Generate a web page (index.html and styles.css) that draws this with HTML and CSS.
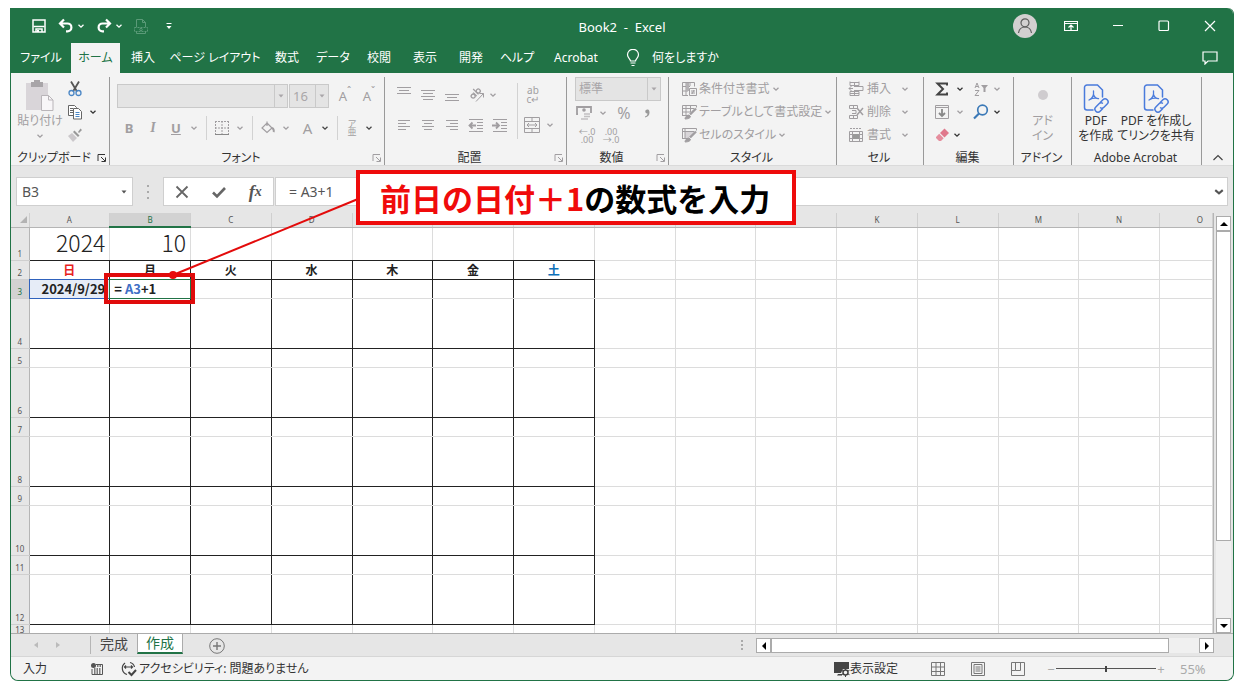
FILE: index.html
```html
<!DOCTYPE html>
<html lang="ja">
<head>
<meta charset="utf-8">
<title>Book2 - Excel</title>
<link rel="stylesheet" href="styles.css">
</head>
<body>
<svg class="defs" aria-hidden="true">
  <symbol id="chev" viewBox="0 0 8 8"><path d="M1.5 2.8 4 5.2 6.5 2.8" fill="none" stroke="currentColor" stroke-width="1.3"/></symbol>
  <symbol id="tri" viewBox="0 0 8 8"><path d="M1.5 2.5h5L4 5.5z" fill="currentColor"/></symbol>
  <symbol id="launch" viewBox="0 0 10 10"><path d="M1 8V1.500h7M4 4l4 4M8.500 4.500v4h-4" fill="none" stroke="currentColor"/></symbol>
  <symbol id="pdf" viewBox="0 0 28 30"><g fill="none" stroke="#4a7bdc" stroke-width="1.500" stroke-linecap="round"><path d="M11 27H5a2.500 2.500 0 0 1-2.500-2.500v-20A2.500 2.500 0 0 1 5 2h10.500l5 5v7"/><path d="M7 17c3.500-1.500 5-5 4.500-9M11.500 11.500c.8 2.500 2.500 4 5 4.200M7.500 16.800c2.500-1.500 5.500-2 9-1.200" stroke-width="1.300"/><g transform="rotate(-45 19.500 22.500)"><path d="M18 25.500h-3.500a3 3 0 0 1 0-6H19a3 3 0 0 1 2.800 2"/><path d="M21 19.500h3.500a3 3 0 0 1 0 6H20a3 3 0 0 1-2.800-2"/></g></g></symbol>
</svg>

<main class="window">
  <header class="titlebar">
    <div class="quick">
      <button aria-label="上書き保存"><svg width="16" height="16" viewBox="0 0 16 16" fill="none" stroke="currentColor" stroke-width="1.500"><path d="M2 2h12v12H2z"/><path d="M2.500 8.500h11" /><path d="M5 14v-3h6v3" /><path d="M6 12h2v2H6z" fill="currentColor" stroke="none"/></svg></button>
      <button aria-label="元に戻す"><svg width="16" height="16" viewBox="0 0 16 16" fill="none" stroke="currentColor" stroke-width="2.200"><path d="M6 1.500 2 5.500l4 4M2.500 5.500h7a3.800 3.800 0 0 1 0 7.800H8"/></svg><svg width="8" height="8"><use href="#chev"/></svg></button>
      <button aria-label="やり直し"><svg width="16" height="16" viewBox="0 0 16 16" fill="none" stroke="currentColor" stroke-width="2.200"><path d="m10 1.500 4 4-4 4M13.500 5.500h-7a3.800 3.800 0 0 0 0 7.800H8"/></svg><svg width="8" height="8"><use href="#chev"/></svg></button>
      <button aria-label="PDF" class="faint"><svg width="14" height="16" viewBox="0 0 14 16" fill="none" stroke="currentColor"><path d="M2.500 9V1.500h6l3 3V9M8.500 1.500v3h3M2.500 14v1.500h9V14"/><path d="M.5 9.500h13v4H.5z" stroke-dasharray="2 1"/><circle cx="7" cy="11.500" r="1.200"/></svg></button>
      <button aria-label="カスタマイズ"><svg width="8" height="8" viewBox="0 0 8 8" fill="currentColor"><path d="M1.500 1h5v1h-5zM1.500 4h5L4 7z"/></svg></button>
    </div>
    <h1 class="title">Book2&nbsp; -&nbsp; Excel</h1>
    <div class="syscontrols">
      <button class="avatar" aria-label="アカウント"><svg width="24" height="24" viewBox="0 0 24 24"><circle cx="12" cy="12" r="12" fill="#d2d0d0"/><g fill="none" stroke="#5c5c5c" stroke-width="1.200"><circle cx="12" cy="8.800" r="4"/><path d="M5.500 19c.6-4 3-6 6.500-6s5.900 2 6.500 6"/></g></svg></button>
      <button aria-label="リボンの表示オプション"><svg width="14" height="12" viewBox="0 0 14 12" fill="none" stroke="currentColor"><path d="M.5 1.500h13v9H.5zM.5 3.500h13M7 10V5M4.500 7.500 7 5l2.500 2.500" stroke-width="1.200"/></svg></button>
      <button aria-label="最小化"><svg width="12" height="12" viewBox="0 0 12 12"><path d="M1 5.500h10" stroke="currentColor"/></svg></button>
      <button aria-label="最大化"><svg width="12" height="12" viewBox="0 0 12 12"><rect x="1" y="1" width="9.500" height="9.500" rx="1" fill="none" stroke="currentColor" stroke-width="1.200"/></svg></button>
      <button aria-label="閉じる"><svg width="12" height="12" viewBox="0 0 12 12"><path d="m1 1 10 10M11 1 1 11" stroke="currentColor" stroke-width="1.200"/></svg></button>
    </div>
  </header>

  <nav class="tabs">
    <button class="tab">ファイル</button><button class="tab active">ホーム</button><button class="tab">挿入</button><button class="tab wide">ページ レイアウト</button><button class="tab">数式</button><button class="tab">データ</button><button class="tab">校閲</button><button class="tab">表示</button><button class="tab">開発</button><button class="tab">ヘルプ</button><button class="tab acro">Acrobat</button>
    <button class="tell"><svg width="14" height="18" viewBox="0 0 14 18" fill="none" stroke="currentColor" stroke-width="1.200"><path d="M4.500 12c0-2-3-3.200-3-6.200a5 5 0 0 1 11 0c0 3-3 4.200-3 6.200zM4.500 14h5M5.500 16.500h3"/></svg>何をしますか</button>
    <button class="comment" aria-label="コメント"><svg width="16" height="14" viewBox="0 0 16 14" fill="none" stroke="currentColor" stroke-width="1.200"><path d="M1 1h14v9H6l-3 3v-3H1z"/></svg></button>
  </nav>

  <section class="ribbon">
    <div class="group clip">
      <div class="tools">
        <button class="paste off"><svg width="28" height="32" viewBox="0 0 28 32"><path d="M0 3h22v27H0z" fill="#d9d5d9"/><path d="M5 2h3V0h6v2h3v5H5z" fill="#a8a5a8"/><path d="M15.500 15.500h7l4.500 4.500v10.500H15.500z" fill="#f8f6f8" stroke="#b9b5b9"/><path d="M22.500 15.500V20H27" fill="none" stroke="#b9b5b9"/></svg>貼り付け<svg width="8" height="8"><use href="#chev"/></svg></button>
        <div class="stack">
          <button aria-label="切り取り"><svg width="16" height="16" viewBox="0 0 16 16" fill="none"><path d="m4 .5 6 10M12 .5l-6 10" stroke="#555" stroke-width="1.800"/><circle cx="4.500" cy="12" r="2.500" stroke="#4a86c5" stroke-width="1.300"/><circle cx="11.500" cy="12" r="2.500" stroke="#4a86c5" stroke-width="1.300"/></svg></button>
          <button aria-label="コピー"><svg width="16" height="16" viewBox="0 0 16 16" fill="#fff" stroke="#666"><path d="M1.500 1.500h6l2 2v8h-8zM3 4.500h3M3 6.500h3M3 8.500h3"/><path d="M6.500 4.500h5l3 3v7.500h-8z"/><path d="M8.500 8.500h4M8.500 10.500h4M8.500 12.500h4" stroke="#4a86c5"/></svg><svg class="push" width="8" height="8"><use href="#chev"/></svg></button>
          <button class="off" aria-label="書式のコピー"><svg width="16" height="16" viewBox="0 0 16 16"><path d="M1 9l4-3 5 5-4 4z" fill="#cbc8cb"/><path d="m6 5 5 5 1.500-1.500-5-5zM11 5l2.500-3.500 1.500 1.500L12 6z" fill="#999"/></svg></button>
        </div>
      </div>
      <div class="caption"><span>クリップボード</span><button aria-label="クリップボード詳細"><svg width="10" height="10"><use href="#launch"/></svg></button></div>
    </div>

    <div class="group font">
      <div class="tools col">
        <div class="line">
          <label class="combo fname"><select aria-label="フォント名" disabled><option></option></select><svg width="8" height="8"><use href="#tri"/></svg></label>
          <label class="combo fsize"><select aria-label="フォントサイズ" disabled><option>16</option></select><svg width="8" height="8"><use href="#tri"/></svg></label>
          <button class="off glyph grow">A<sup>ˆ</sup></button><button class="off glyph grow">A<sup>ˇ</sup></button>
        </div>
        <div class="line styles">
          <button class="off glyph"><b>B</b></button><button class="off glyph serif"><i>I</i></button><button class="off split under"><b><u>U</u></b><svg width="8" height="8"><use href="#chev"/></svg></button>
          <i class="sep"></i>
          <button class="off split" aria-label="罫線"><svg width="16" height="16" viewBox="0 0 16 16" fill="none" stroke="currentColor"><path d="M1.500 1v13.500M8 1v13.500M14.500 1v13.500M1 1.500h14M1 8h14" stroke-dasharray="2 1"/><path d="M1 14.500h14" stroke="#888"/></svg><svg width="8" height="8"><use href="#chev"/></svg></button>
          <i class="sep"></i>
          <button class="off split" aria-label="塗りつぶし"><svg width="16" height="16" viewBox="0 0 16 16" fill="none" stroke="currentColor" stroke-width="1.200"><path d="m7 3 5 5-5 4.500L2 8zM7 6V1.500"/><path d="M12 8c2 1 2 3 1.500 4" stroke-width="2"/></svg><svg width="8" height="8"><use href="#chev"/></svg></button>
          <button class="off split big">A<svg class="dark" width="8" height="8"><use href="#chev"/></svg></button>
          <i class="sep"></i>
          <button class="off split ruby"><span>ア<br>亜</span><svg class="dark" width="8" height="8"><use href="#chev"/></svg></button>
        </div>
      </div>
      <div class="caption"><span>フォント</span><button class="off" aria-label="フォント詳細"><svg width="10" height="10"><use href="#launch"/></svg></button></div>
    </div>

    <div class="group align">
      <div class="tools">
        <div class="alignments off">
          <button aria-label="上揃え"><svg width="16" height="16" viewBox="0 0 16 16" stroke="currentColor"><path d="M1 .5h14M3 3.500h10M1 6.500h14"/></svg></button>
          <button aria-label="上下中央"><svg width="16" height="16" viewBox="0 0 16 16" stroke="currentColor"><path d="M1 3.500h14M3 6.500h10M1 9.500h14M3 12.500h10"/></svg></button>
          <button aria-label="下揃え"><svg width="16" height="16" viewBox="0 0 16 16" stroke="currentColor"><path d="M1 7.500h14M3 10.500h10M1 13.500h14"/></svg></button>
          <button class="two" aria-label="方向"><svg width="18" height="16" viewBox="0 0 18 16" fill="none" stroke="currentColor"><g transform="rotate(-45 8 7)" stroke-width="1.300"><circle cx="4.500" cy="6.500" r="2"/><path d="M7 4v5M9.500 1.500V9"/><circle cx="11.700" cy="6.500" r="2"/></g><path d="m8 14.500 7.500-8M11.500 6.500h4v4"/></svg><svg width="8" height="8"><use href="#chev"/></svg></button>
          <button aria-label="左揃え"><svg width="16" height="16" viewBox="0 0 16 16" stroke="currentColor"><path d="M2 3.500h12M2 6.500h8M2 9.500h12M2 12.500h8"/></svg></button>
          <button aria-label="中央揃え"><svg width="16" height="16" viewBox="0 0 16 16" stroke="currentColor"><path d="M2 3.500h12M4 6.500h8M2 9.500h12M4 12.500h8"/></svg></button>
          <button aria-label="右揃え"><svg width="16" height="16" viewBox="0 0 16 16" stroke="currentColor"><path d="M2 3.500h12M6 6.500h8M2 9.500h12M6 12.500h8"/></svg></button>
          <button aria-label="インデントを減らす"><svg width="16" height="16" viewBox="0 0 16 16" fill="none" stroke="currentColor"><path d="M1 2.500h14M9 5.500h6M9 8.500h6M9 11.500h6M1 14.500h14"/><path d="M8 8.500H2M4.500 5.500l-3 3 3 3" stroke-width="1.800"/></svg></button>
          <button aria-label="インデントを増やす"><svg width="16" height="16" viewBox="0 0 16 16" fill="none" stroke="currentColor"><path d="M1 2.500h14M9 5.500h6M9 8.500h6M9 11.500h6M1 14.500h14"/><path d="M0 8.500h6M4 5.500l3 3-3 3" stroke-width="1.800"/></svg></button>
        </div>
        <i class="sep tall"></i>
        <div class="merge off">
          <button class="wrap">ab<br>c↵</button>
          <button class="split" aria-label="セルを結合"><svg width="16" height="16" viewBox="0 0 16 16" fill="none" stroke="currentColor"><path d="M.5.5h15v15H.5zM.5 4.500h15M.5 11.500h15M8 .5v4M8 11.500v4M3 8h10M5 6 3 8l2 2M11 6l2 2-2 2"/></svg><svg width="8" height="8"><use href="#chev"/></svg></button>
        </div>
      </div>
      <div class="caption"><span>配置</span><button class="off" aria-label="配置詳細"><svg width="10" height="10"><use href="#launch"/></svg></button></div>
    </div>

    <div class="group number">
      <div class="tools col">
        <label class="combo"><select aria-label="表示形式" disabled><option>標準</option></select><svg width="8" height="8"><use href="#tri"/></svg></label>
        <div class="line off">
          <button class="split" aria-label="通貨"><svg width="18" height="16" viewBox="0 0 18 16" fill="none" stroke="currentColor"><path d="M3 9H2V2h14v6" stroke-width="1.800"/><circle cx="9" cy="5" r="1.800" fill="currentColor" stroke="none"/><path d="M9 9h6M9 11.500h6M6 14h7" stroke-width="1.400" opacity=".6"/></svg><svg width="8" height="8"><use href="#chev"/></svg></button>
          <button class="pct">%</button><button class="pct comma" aria-label="桁区切り"><svg width="8" height="10" viewBox="0 0 8 10"><path d="M4 1.500a2 2 0 1 0 .5 4C4.500 7 3.500 8 2 8.500v1C5 9 6.500 7 6.500 4.500S5.500 1.500 4 1.500z" fill="#999"/></svg></button>
        </div>
        <div class="line off decimals"><button>←.0<br>.00</button><button>.00<br>→.0</button></div>
      </div>
      <div class="caption"><span>数値</span><button class="off" aria-label="数値詳細"><svg width="10" height="10"><use href="#launch"/></svg></button></div>
    </div>

    <div class="group style">
      <div class="tools col off list">
        <button><svg width="16" height="16" viewBox="0 0 16 16" fill="none" stroke="currentColor"><path d="M1.500 1.500h12v4M1.500 1.500v13H7M1 5.500h8M1 10h6M5 1v13M9 1v4"/><path d="M5 2h3v8H5z" fill="#b5b2b5" stroke="none"/><path d="M8.500 7.500h7v7h-7zM10 10h4M10 12h4M13 9l-2 4"/></svg>条件付き書式<svg width="8" height="8"><use href="#chev"/></svg></button>
        <button><svg width="16" height="16" viewBox="0 0 16 16" fill="none" stroke="currentColor"><path d="M1.500 11.500v-10h14v2M1 4.500h12M1 8h9M1 11.500h6M5 1v10M9.500 1v7"/><path d="m15 4.500-6 6" stroke-width="2.400"/><path d="M4 15c0-2 2-4 4-4l1.500 1.500C9.500 14 7 15 4 15z" fill="currentColor"/></svg>テーブルとして書式設定<svg width="8" height="8"><use href="#chev"/></svg></button>
        <button><svg width="16" height="16" viewBox="0 0 16 16" fill="none" stroke="currentColor"><path d="M4 5h9l-5 6H4z" fill="#d8d5d8" stroke="none"/><path d="M1.500 11.500v-10h14v2M1 4.500h12M1 11.500h6M4 1v10"/><path d="m15 4.500-6 6" stroke-width="2.400"/><path d="M4 15c0-2 2-4 4-4l1.500 1.500C9.500 14 7 15 4 15z" fill="currentColor"/></svg>セルのスタイル<svg width="8" height="8"><use href="#chev"/></svg></button>
      </div>
      <div class="caption"><span>スタイル</span></div>
    </div>

    <div class="group cells">
      <div class="tools col off list">
        <button><svg width="16" height="16" viewBox="0 0 16 16" fill="none" stroke="currentColor"><path d="M2 1.500h9M2 .5v4h9v-4M6.500 1v3M2 10.500h9v4H2zM2 12.500h9M6.500 10v5M6 5.500h9v4H6M5 7.500H1M3.500 5 1 7.500 3.500 10" /></svg><span>挿入</span><svg width="8" height="8"><use href="#chev"/></svg></button>
        <button><svg width="16" height="16" viewBox="0 0 16 16" fill="none" stroke="currentColor"><path d="M1.500 1.500h8v3h-8zM5.500 1v3M1.500 11.500h8v3h-8zM5.500 11v4M4 6.500h4v3H4"/><path d="m9 4 6 7M15 4l-6 7" stroke-width="1.500"/></svg><span>削除</span><svg width="8" height="8"><use href="#chev"/></svg></button>
        <button><svg width="16" height="16" viewBox="0 0 16 16" fill="none" stroke="currentColor"><path d="M2 1.500h12" stroke-dasharray="2 1"/><path d="M1.500 4.500h13v10h-13zM1 7.500h13M1 11.500h13M4.500 4v10M11.500 4v10"/><path d="M5 7h6v5H5z" fill="#999" stroke="none"/></svg><span>書式</span><svg width="8" height="8"><use href="#chev"/></svg></button>
      </div>
      <div class="caption"><span>セル</span></div>
    </div>

    <div class="group edit">
      <div class="tools grid">
        <button aria-label="合計"><svg width="16" height="16" viewBox="0 0 16 16" fill="none" stroke="#444" stroke-width="2"><path d="M13 4.500V2.500H3.500L9 8l-5.500 5.500H13v-2"/></svg><svg width="8" height="8"><use href="#chev"/></svg></button>
        <button class="off" aria-label="並べ替えとフィルター"><svg width="16" height="16" viewBox="0 0 16 16" fill="none" stroke="currentColor"><path d="m2 7 2-5 2 5M3 5.500h2M2 9.500h4l-4 5h4"/><path d="M8 4h7l-2.500 3v4h-2V7z" fill="currentColor" stroke="none"/></svg><svg width="8" height="8"><use href="#chev"/></svg></button>
        <button class="off" aria-label="フィル"><svg width="16" height="16" viewBox="0 0 16 16" fill="none" stroke="currentColor"><path d="M1.500 1.500h13v13h-13zM1.500 3.500h13"/><path d="M8 5v7M5 9l3 3 3-3" stroke="#888" stroke-width="1.800"/></svg><svg width="8" height="8"><use href="#chev"/></svg></button>
        <button aria-label="検索と選択"><svg width="16" height="16" viewBox="0 0 16 16" fill="none" stroke="#3b79b7" stroke-width="1.700"><circle cx="9.500" cy="6" r="4.800"/><path d="m6 9.500-5 5" stroke-width="2.200"/></svg><svg width="8" height="8"><use href="#chev"/></svg></button>
        <button class="clear" aria-label="クリア"><svg width="16" height="16" viewBox="0 0 16 16"><path d="m6 6 4.500-4.500 4.500 4.500-4.500 4.500z" fill="#e0788c"/><path d="m5.200 6.800 4.500 4.500L7 14H5l-3-3v-1z" fill="#e58d9d"/></svg><svg width="8" height="8"><use href="#chev"/></svg></button>
      </div>
      <div class="caption"><span>編集</span></div>
    </div>

    <div class="group addin">
      <div class="tools"><button class="tallbtn off"><svg width="28" height="30" viewBox="0 0 28 30"><circle cx="14" cy="12" r="5" fill="#cfcccf"/></svg>アド<br>イン</button></div>
      <div class="caption"><span>アドイン</span></div>
    </div>

    <div class="group acrobat">
      <div class="tools">
        <button class="tallbtn"><svg width="28" height="30"><use href="#pdf"/></svg>PDF<br>を作成</button>
        <button class="tallbtn"><svg width="28" height="30"><use href="#pdf"/></svg>PDF を作成し<br>てリンクを共有</button>
      </div>
      <div class="caption"><span>Adobe Acrobat</span></div>
    </div>
    <button class="collapse" aria-label="リボンを折りたたむ"><svg width="12" height="8" viewBox="0 0 12 8"><path d="m1.500 6 4.500-4.500L10.500 6" fill="none" stroke="#444" stroke-width="1.200"/></svg></button>
  </section>

  <section class="formulabar">
    <label class="namebox"><input aria-label="名前ボックス" value="B3"><svg width="8" height="8"><use href="#tri"/></svg></label>
    <span class="dots"></span>
    <div class="fbuttons">
      <button aria-label="キャンセル"><svg width="14" height="14" viewBox="0 0 14 14" stroke="#666" stroke-width="1.800"><path d="m1.500 1.500 11 11M12.500 1.500l-11 11"/></svg></button>
      <button aria-label="入力"><svg width="14" height="14" viewBox="0 0 14 14" fill="none" stroke="#666" stroke-width="2.600"><path d="m1 7.500 4 4 8-8.500"/></svg></button>
      <button class="fx"><i>f</i><i>x</i></button>
    </div>
    <label class="formula"><input aria-label="数式バー" value="= A3+1"><svg width="10" height="10" viewBox="0 0 8 8"><path d="M1 2.500 4 5l3-2.500" fill="none" stroke="#555" stroke-width="1.700"/></svg></label>
  </section>

  <section class="sheetarea">
    <table class="sheet">
      <colgroup><col class="rowhead"><col span="14"><col class="last"></colgroup>
      <thead><tr><th class="corner"><svg width="8" height="8" viewBox="0 0 8 8"><path d="M8 1v7H1z" fill="#b3b3b3"/></svg></th><th>A</th><th class="sel">B</th><th>C</th><th>D</th><th></th><th></th><th></th><th></th><th></th><th></th><th>K</th><th>L</th><th>M</th><th>N</th><th class="o">O</th></tr></thead>
      <tbody>
        <tr class="first"><th>1</th><td>2024</td><td>10</td><td></td><td></td><td></td><td></td><td></td><td></td><td></td><td></td><td></td><td></td><td></td><td></td><td></td></tr>
        <tr class="days cal end"><th>2</th><td class="sun">日</td><td>月</td><td>火</td><td>水</td><td>木</td><td>金</td><td class="sat">土</td><td></td><td></td><td></td><td></td><td></td><td></td><td></td><td></td></tr>
        <tr class="cal dates"><th class="sel">3</th><td class="ref"><div>2024/9/29</div></td><td class="editing"><div>= <span>A3</span>+1</div></td><td></td><td></td><td></td><td></td><td></td><td></td><td></td><td></td><td></td><td></td><td></td><td></td><td></td></tr>
        <tr class="cal tall end"><th>4</th><td></td><td></td><td></td><td></td><td></td><td></td><td></td><td></td><td></td><td></td><td></td><td></td><td></td><td></td><td></td></tr>
        <tr class="cal"><th>5</th><td></td><td></td><td></td><td></td><td></td><td></td><td></td><td></td><td></td><td></td><td></td><td></td><td></td><td></td><td></td></tr>
        <tr class="cal tall end"><th>6</th><td></td><td></td><td></td><td></td><td></td><td></td><td></td><td></td><td></td><td></td><td></td><td></td><td></td><td></td><td></td></tr>
        <tr class="cal"><th>7</th><td></td><td></td><td></td><td></td><td></td><td></td><td></td><td></td><td></td><td></td><td></td><td></td><td></td><td></td><td></td></tr>
        <tr class="cal tall end"><th>8</th><td></td><td></td><td></td><td></td><td></td><td></td><td></td><td></td><td></td><td></td><td></td><td></td><td></td><td></td><td></td></tr>
        <tr class="cal"><th>9</th><td></td><td></td><td></td><td></td><td></td><td></td><td></td><td></td><td></td><td></td><td></td><td></td><td></td><td></td><td></td></tr>
        <tr class="cal tall end"><th>10</th><td></td><td></td><td></td><td></td><td></td><td></td><td></td><td></td><td></td><td></td><td></td><td></td><td></td><td></td><td></td></tr>
        <tr class="cal"><th>11</th><td></td><td></td><td></td><td></td><td></td><td></td><td></td><td></td><td></td><td></td><td></td><td></td><td></td><td></td><td></td></tr>
        <tr class="cal tall end"><th>12</th><td></td><td></td><td></td><td></td><td></td><td></td><td></td><td></td><td></td><td></td><td></td><td></td><td></td><td></td><td></td></tr>
        <tr class="cut"><th>13</th><td></td><td></td><td></td><td></td><td></td><td></td><td></td><td></td><td></td><td></td><td></td><td></td><td></td><td></td><td></td></tr>
      </tbody>
    </table>
    <div class="vscroll">
      <button aria-label="上へ"><svg width="10" height="8" viewBox="0 0 10 8"><path d="M1 6h8L5 2z"/></svg></button>
      <div class="track"><div class="thumb"></div></div>
      <button aria-label="下へ"><svg width="10" height="8" viewBox="0 0 10 8"><path d="M1 2h8L5 6z"/></svg></button>
    </div>
  </section>

  <section class="sheettabs">
    <div class="navs"><svg width="6" height="8" viewBox="0 0 6 8"><path d="M5 1v6L1 4z" fill="#bbb"/></svg><svg width="6" height="8" viewBox="0 0 6 8"><path d="M1 1v6l4-3z" fill="#bbb"/></svg></div>
    <button class="stab">完成</button><button class="stab on">作成</button>
    <button class="add" aria-label="新しいシート"><svg width="16" height="16" viewBox="0 0 16 16" fill="none" stroke="#777"><circle cx="8" cy="8" r="7.300"/><path d="M8 4v8M4 8h8" stroke-width="1.400"/></svg></button>
    <span class="dots small"></span>
    <div class="hscroll">
      <button aria-label="左へ"><svg width="8" height="10" viewBox="0 0 8 10"><path d="M6 1v8L2 5z"/></svg></button>
      <div class="track"><div class="thumb"></div></div>
      <button aria-label="右へ"><svg width="8" height="10" viewBox="0 0 8 10"><path d="M2 1v8l4-4z"/></svg></button>
    </div>
  </section>

  <footer class="status">
    <span class="mode">入力</span>
    <svg width="12" height="12" viewBox="0 0 12 12" fill="none" stroke="#555"><path d="M5 1.500h6.500v10H1V6"/><circle cx="2.500" cy="2.500" r="2.500" fill="#555" stroke="none"/><path d="M6 3h5M3 6h7M3 8h7M3 10h7" stroke-dasharray="1.500 1" stroke-width="1.400"/></svg>
    <span class="access"><svg width="16" height="16" viewBox="0 0 16 16" fill="none" stroke="#444" stroke-width="1.200"><path d="M4 2a6.500 6.500 0 0 0 2 11.500M9 1.500c2 .5 4 2 4.500 4.500M3.500 6h8M5 4.500 3.500 6 5 7.500M10 4.500 11.500 6 10 7.500"/><path d="m7.500 11 3 3 4.500-5" stroke-width="2"/></svg>アクセシビリティ: 問題ありません</span>
    <button class="display"><svg width="16" height="16" viewBox="0 0 16 16"><path d="M0 1h15v7H9l-2 4H0zM4 13h4v1.500H3z" fill="#444"/><circle cx="11.500" cy="11.500" r="2.500" fill="#f3f3f3" stroke="#444" stroke-width="1.500"/><path d="M11.500 7v2M11.500 14v2M7.500 9.300l2 1M13.500 12.700l2 1M15.500 9.300l-2 1M9.500 12.700l-2 1" stroke="#444"/></svg>表示設定</button>
    <div class="views">
      <button aria-label="標準"><svg width="14" height="14" viewBox="0 0 14 14" fill="none" stroke="#777"><path d="M.5.5h13v13H.5zM.5 5h13M.5 9.500h13M5 .5v13M9.500.5v13"/></svg></button>
      <button aria-label="ページ レイアウト"><svg width="14" height="14" viewBox="0 0 14 14" fill="none" stroke="#777"><path d="M.5.5h13v13H.5zM3 2.500h8v9H3zM4.500 5h5M4.500 7h5M4.500 9h5"/></svg></button>
      <button aria-label="改ページ プレビュー"><svg width="14" height="14" viewBox="0 0 14 14" fill="none" stroke="#777"><path d="M.5.5h13v13H.5zM4.500 1v7.500h5V1M.5 8.500h4"/></svg></button>
    </div>
    <div class="zoom"><span>−</span><input type="range" aria-label="ズーム" value="50"><span>+</span><output>55%</output></div>
  </footer>

  <div class="frame"></div>
  <svg class="pointer" aria-hidden="true"><path d="m347 191-185 76" stroke="#e30b0b" stroke-width="2"/><circle cx="162" cy="267" r="4" fill="#e80c0c"/></svg>
  <p class="callout"><em>前日の日付＋1</em>の数式を入力</p>
</main>
</body>
</html>
```
FILE: styles.css
```css
* { box-sizing: border-box; }
body {
  margin: 0;
  padding: 8px 7px 8px 10px;
  background: #fff;
  color: #333;
  font: 12px/16px "Noto Sans", "Noto Sans CJK JP", sans-serif;
  font-feature-settings: "palt";
}
button, input, select { font: inherit; color: inherit; font-feature-settings: inherit; }
button {
  display: inline-flex;
  align-items: center;
  justify-content: center;
  padding: 0;
  border: 0;
  background: none;
  white-space: nowrap;
}
svg { flex: none; }
.defs { position: absolute; width: 0; height: 0; }
.off { color: #a19ea1; }
.dark { color: #444; }

.window {
  position: relative;
  border: 1px solid #217346;
  border-top: 0;
  border-radius: 0 6px 8px 8px;
  background: #e6e6e6;
}

/* title bar */
.titlebar {
  display: grid;
  grid-template-columns: 1fr auto 1fr;
  align-items: center;
  height: 35px;
  background: #217346;
  color: #fff;
  border-radius: 0 6px 0 0;
}
.quick { display: flex; gap: 11px; padding-left: 20px; }
.quick button { gap: 3px; }
.quick button:nth-child(4) { margin-right: 6px; }
.quick .faint { color: #5b9a78; }
.title { margin: 0; padding-top: 2px; font-size: 13px; font-weight: 400; }
.syscontrols { display: flex; align-items: center; justify-content: flex-end; gap: 34px; padding-right: 17px; }
.avatar { margin-right: -7px; }

/* ribbon tabs */
.tabs { display: flex; height: 30px; background: #217346; color: #fff; }
.tab { min-width: 46px; padding: 0 3px; }
.tab:first-child { min-width: 60px; }
.tab.active { min-width: 49px; background: #f3f3f3; color: #217346; }
.tab.wide { min-width: 98px; }
.tab.acro { min-width: 72px; }
.tell { gap: 12px; padding-left: 14px; }
.comment { margin-left: auto; padding-right: 15px; }

/* ribbon */
.ribbon {
  display: grid;
  grid-template-columns: 99px 275px 182px 102px 168px 87px 90px 58px 130px 1fr;
  height: 93px;
  padding-top: 4px;
  background: #f3f3f3;
  border-bottom: 1px solid #dadada;
}
.group { display: flex; flex-direction: column; border-right: 1px solid #999; }
.tools { display: flex; height: 73px; }
.col { flex-direction: column; }
.line { display: flex; align-items: center; }
.caption { display: flex; align-items: center; height: 15px; padding-right: 2px; }
.caption span { flex: 1; text-align: center; }
.caption button { width: 10px; }
.sep { width: 1px; height: 24px; background: #d2d2d2; }

.clip .tools { padding: 3px 0 0 8px; gap: 6px; }
.paste { flex-direction: column; width: 42px; justify-content: flex-start; gap: 1px; }
.paste svg:last-child { margin-top: 2px; }
.stack { display: grid; grid-template-rows: repeat(3, 23px); justify-items: start; margin-top: -3px; }
.push { margin-left: 6px; }

.combo { position: relative; display: flex; align-items: center; height: 24px; color: #a9a6a9; }
.combo select {
  appearance: none;
  width: 100%;
  height: 100%;
  padding: 0 3px;
  border: 1px solid #c9c9c9;
  border-radius: 0;
  background: linear-gradient(#c9c9c9, #c9c9c9) right 12px top 0 / 1px 100% no-repeat #e4e4e4;
  opacity: 1;
}
.combo svg { position: absolute; right: 3px; }
.font .tools { padding: 6px 0 0 7px; gap: 6px; }
.fname { width: 171px; margin-right: 1px; }
.fsize { width: 40px; margin-right: 4px; font-size: 13px; }
.glyph { width: 24px; height: 26px; font-size: 13px; }
.glyph sup { font-size: 10px; line-height: 8px; align-self: flex-start; padding-top: 4px; }
.serif { font-family: "Liberation Serif", serif; font-size: 14px; font-weight: 700; }
.split { gap: 6px; }
.under { gap: 9px; padding-left: 6px; font-size: 13px; }
.styles .sep { margin: 0 7px 0 8px; }
.big { margin-left: 13px; gap: 9px; font-size: 15px; }
.ruby { padding-left: 2px; gap: 9px; font-size: 9px; line-height: 8px; }

.align .tools { padding: 6px 0 0 7px; }
.alignments { display: grid; grid-template-columns: repeat(5, 24px); grid-template-rows: 24px 36px; height: 60px; }
.alignments .two { grid-column: span 2; gap: 3px; justify-content: flex-start; padding-left: 4px; }
.tall { height: 56px; }
.align .sep { margin: 0 6px 0 5px; }
.merge { display: grid; grid-template-rows: 24px 36px; justify-items: start; height: 60px; }
.wrap { font-size: 10px; line-height: 9px; width: 18px; }

.number .tools { padding-left: 8px; }
.number .combo { width: 86px; }
.number .line { height: 23px; }
.pct { width: 22px; font-size: 16px; margin-left: 6px; }
.comma { margin-left: 1px; }
.decimals button { width: 24px; font-size: 9px; line-height: 8px; }

.list button { justify-content: flex-start; height: 23px; gap: 4px; }
.style .tools { padding-left: 12px; }
.style .list button { gap: 2px; }
.cells .tools { padding-left: 11px; }
.cells .list button { gap: 3px; }
.cells .list span { width: 31px; text-align: left; }

.grid { display: grid; grid-template-columns: 39px 32px; grid-auto-rows: 23px; padding-left: 10px; }
.grid button { gap: 6px; justify-content: flex-start; }
.grid button:nth-child(even) { gap: 4px; }
.grid .clear { gap: 3px; }

.tallbtn { flex-direction: column; justify-content: flex-start; line-height: 15px; }
.addin .tools { justify-content: center; padding-top: 6px; }
.acrobat .tools { justify-content: center; padding-top: 6px; gap: 4px; }
.collapse { align-self: end; justify-self: center; height: 14px; }

/* formula bar */
.formulabar { display: flex; height: 47px; padding: 11px 5px 7px; color: #555; }
.formulabar input { width: 100%; height: 100%; border: 0; padding: 0; background: none; outline: 0; }
.namebox, .formula, .fbuttons { display: flex; align-items: center; background: #fff; border: 1px solid #cfcfcf; }
.namebox { width: 117px; padding: 0 4px 0 5px; font-size: 14px; }
.dots { width: 2px; height: 14px; margin: auto 14px; background: repeating-linear-gradient(#aaa 0 2px, transparent 2px 6px); }
.fbuttons { width: 111px; justify-content: space-around; }
.fx { font: 18px/20px "Liberation Serif", serif; color: #555; font-weight: 700; }
.fx i:last-child { font-size: 14px; }
.formula { flex: 1; margin-left: 1px; padding: 0 3px 0 13px; font-size: 14px; }

/* worksheet */
.sheetarea { display: flex; height: 421px; border-bottom: 1px solid #ababab; overflow: hidden; }
.sheet { flex: 1; width: 0; table-layout: fixed; border-collapse: collapse; background: #fff; color: #222; }
.rowhead { width: 18px; }
.last { width: 53px; }
.sheet td, .sheet th { padding: 0; border-right: 1px solid #dcdcdc; border-bottom: 1px solid #dcdcdc; }
.sheet th { font-size: 8px; line-height: 8px; font-weight: 400; color: #555; background: #e6e6e6; border-color: #b5b5b5; vertical-align: bottom; }
.sheet thead tr { height: 14px; }
.sheet thead th { vertical-align: middle; border-right-color: #cfcfcf; }
.sheet thead .corner { text-align: right; padding-right: 2px; }
.sheet thead .o { text-align: right; padding-right: 9px; }
.sheet thead .sel { background: #d2d2d2; color: #217346; border-bottom: 2px solid #217346; }
.sheet tbody .sel { background: #d2d2d2; color: #217346; border-right-color: #217346; }
.sheet tbody tr { height: 19px; }
.sheet tbody th { border-bottom-color: #cfcfcf; padding-bottom: 2px; }
.sheet tbody .first { height: 33px; }
.sheet tbody .tall { height: 50px; }
.sheet tbody .cut { height: 10px; }
.sheet tbody .cut th { padding: 0; }
.sheet .first td { padding-right: 4px; font: 300 23px/28px "Noto Sans CJK JP", sans-serif; text-align: right; vertical-align: top; font-feature-settings: normal; }
.sheet .cal td:nth-child(-n+8) { border-right-color: #222; }
.sheet .end td:nth-child(-n+8), .sheet .first td:nth-child(-n+8) { border-bottom-color: #222; }
.days td, .dates td { font: 700 12px/16px "Noto Sans CJK JP", sans-serif; text-align: center; }
.days .sun { color: #e8201c; }
.days .sat { color: #0d70b8; }
.sheet .dates td { font-size: 13px; font-feature-settings: normal; vertical-align: top; line-height: 18px; }
.dates .ref div { height: 18px; background: #e6ecf7; outline: 1px solid #2f62bd; text-align: right; padding-right: 4px; }
.dates .editing div { height: 18px; outline: 1px solid #217346; text-align: left; padding-left: 4px; background: #fff; }
.dates .editing span { color: #3f6fc6; }

.vscroll { display: flex; flex-direction: column; width: 20px; padding: 3px 3px 0 2px; border-left: 1px solid #b5b5b5; }
.vscroll button, .hscroll button { width: 15px; height: 15px; background: #fff; border: 1px solid #ababab; }
.track { flex: 1; background: #f0f0f0; }
.thumb { background: #fff; border: 1px solid #ababab; }
.vscroll .thumb { width: 15px; height: 80%; }
.vscroll .track { width: 15px; }

/* sheet tabs */
.sheettabs { display: flex; height: 22px; }
.navs { display: flex; align-items: center; gap: 16px; width: 80px; padding-left: 22px; border-right: 1px solid #b5b5b5; margin: 2px 0; }
.stab { width: 46px; height: 20px; font-size: 14px; color: #444; }
.stab.on { background: #fff; color: #217346; border: solid #ababab; border-width: 0 1px; border-bottom: 2px solid #217346; }
.add { margin-left: 26px; padding-top: 2px; }
.dots.small { height: 10px; margin: auto 13px auto auto; background: repeating-linear-gradient(#aaa 0 2px, transparent 2px 4px); }
.hscroll { display: flex; width: 458px; margin-right: 19px; padding-top: 4px; }
.hscroll .track { height: 15px; }
.hscroll .thumb { width: 93%; height: 15px; }

/* status bar */
.status { display: flex; align-items: center; height: 24px; padding: 0 25px 0 12px; background: #f3f3f3; border-top: 1px solid #d6d6d6; border-radius: 0 0 8px 8px; }
.mode { width: 68px; }
.access { display: flex; align-items: center; margin-left: 18px; gap: 2px; }
.display { margin-left: auto; margin-right: 33px; }
.views { display: flex; gap: 26px; margin-right: 21px; }
.zoom { display: flex; align-items: center; color: #aaa; font-size: 13px; }
.zoom span { width: 10px; text-align: center; }
.zoom output { width: 28px; margin-left: 14px; }
.zoom input { appearance: none; width: 100px; height: 10px; margin: 0; background: linear-gradient(#555, #555) center / 100% 1px no-repeat; }
.zoom input::-webkit-slider-thumb { appearance: none; width: 2px; height: 6px; background: #444; }

/* annotations laid over the sheet */
.frame { position: absolute; left: 93px; top: 265px; width: 91px; height: 31px; border: 4px solid #e00b0b; }
.pointer { position: absolute; left: 0; top: 0; width: 360px; height: 280px; pointer-events: none; }
.callout {
  position: absolute;
  left: 345px;
  top: 162px;
  margin: 0;
  padding: 0 22px 0 20px;
  border: 4px solid #ee0b0b;
  background: #fff;
  color: #000;
  font: 700 31px/47px "Noto Sans CJK JP", sans-serif;
  font-feature-settings: normal;
  white-space: nowrap;
}
.callout em { font-style: normal; color: #f00b0b; }
```
